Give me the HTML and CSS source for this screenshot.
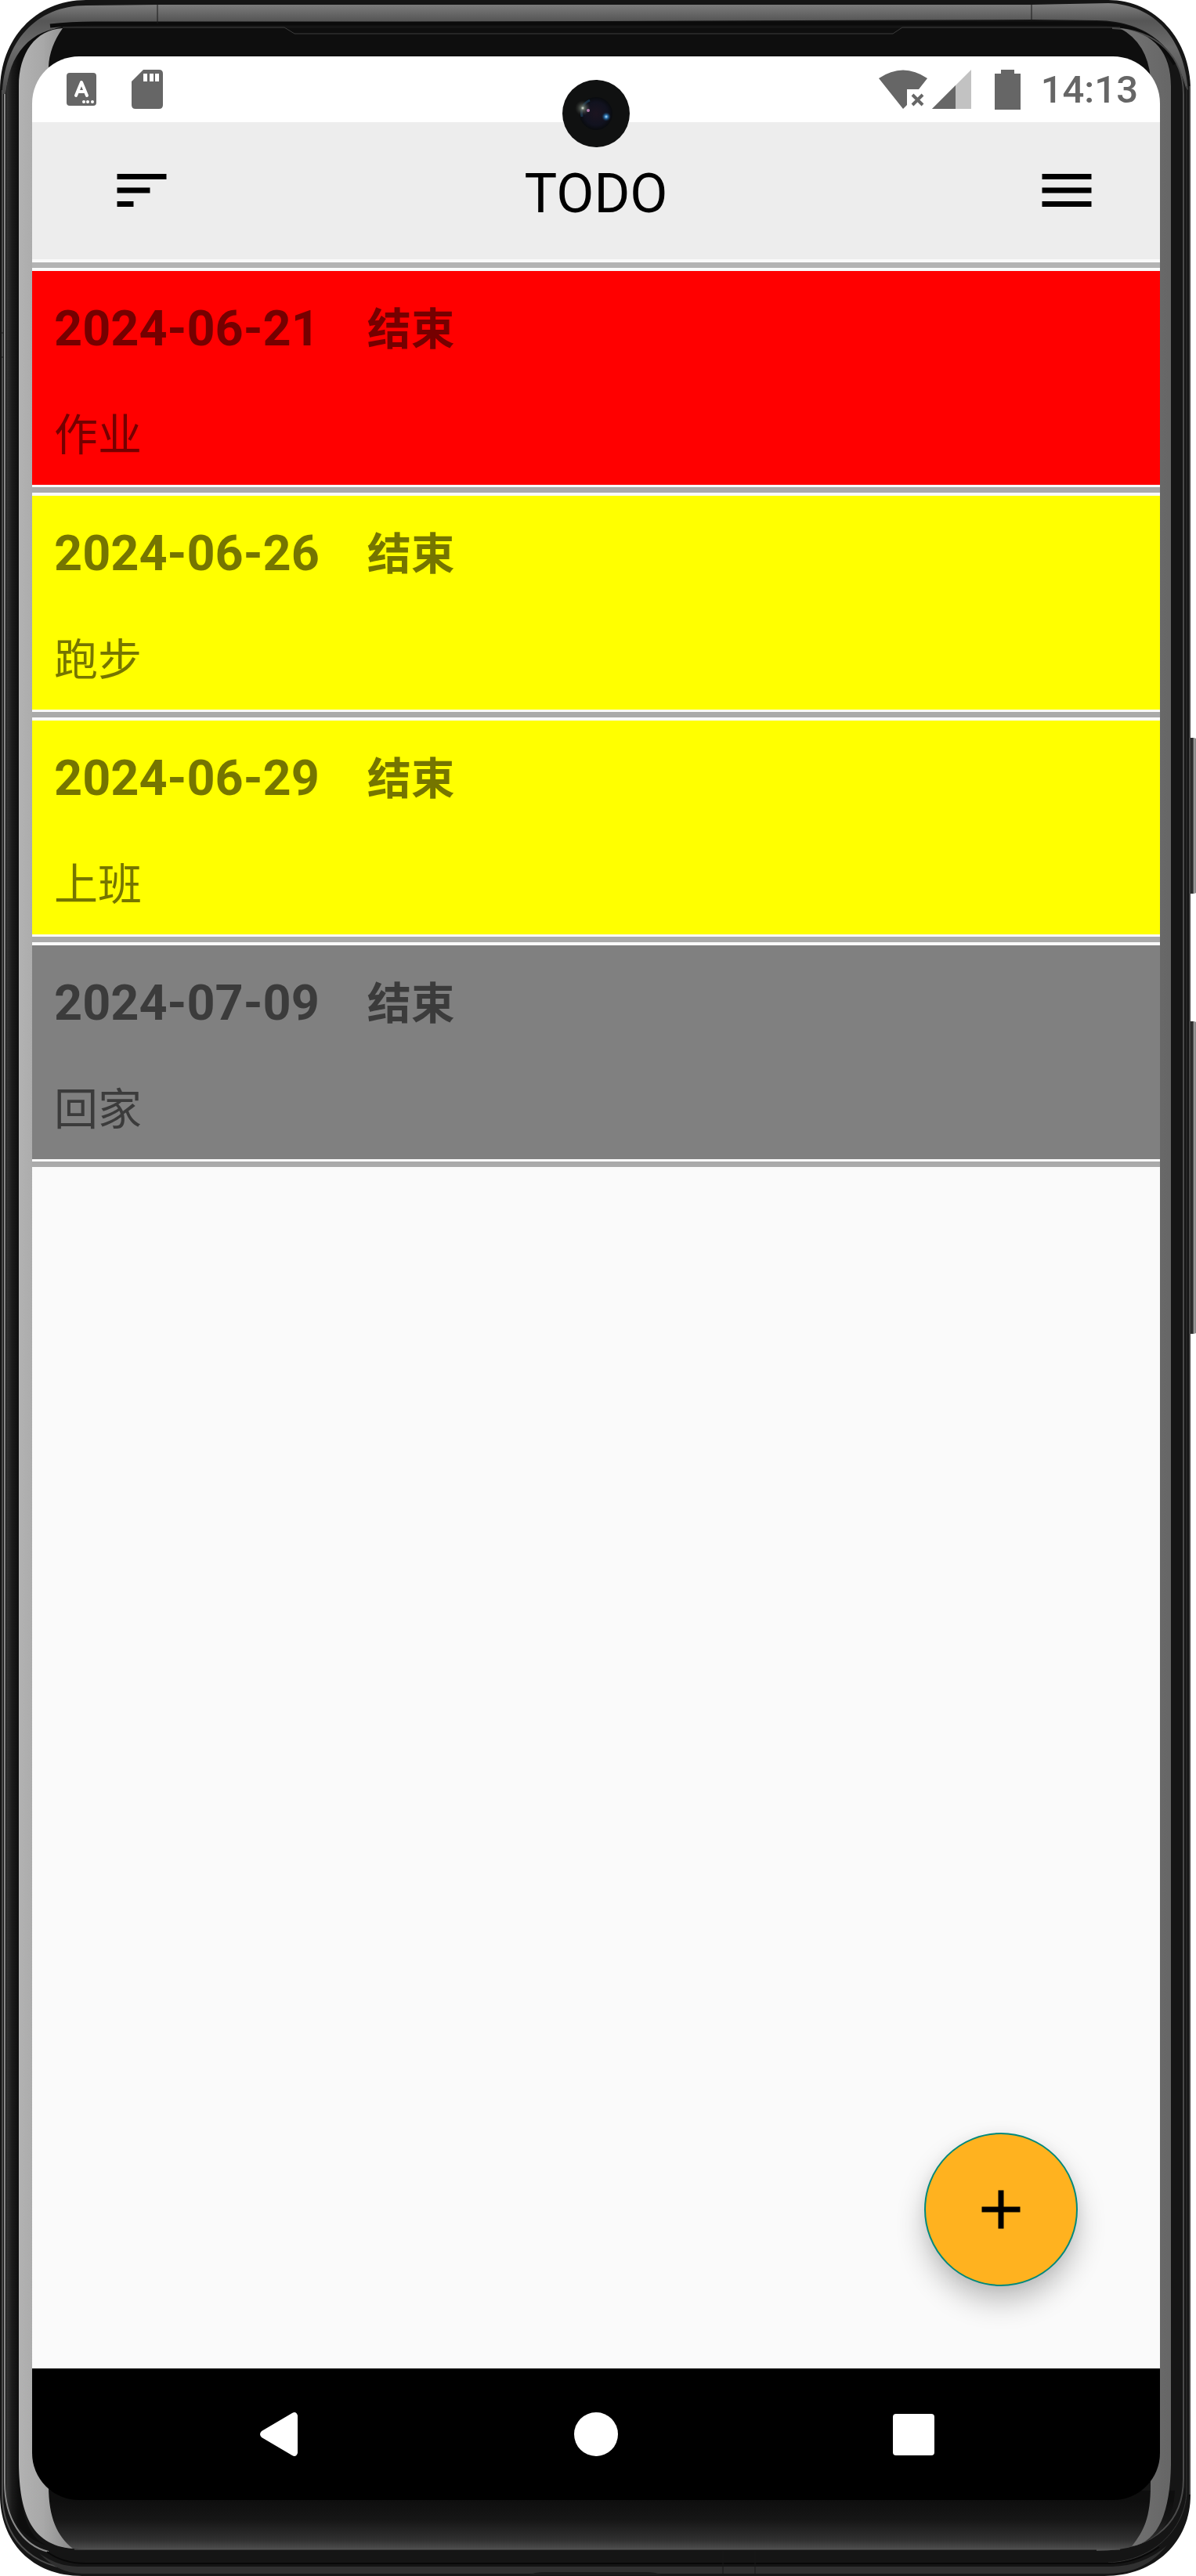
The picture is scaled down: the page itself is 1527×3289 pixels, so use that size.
FILE: index.html
```html
<!DOCTYPE html>
<html lang="zh-CN">
<head>
<meta charset="utf-8">
<meta name="viewport" content="width=device-width, initial-scale=1">
<title>TODO</title>
<link rel="stylesheet" href="styles.css">
</head>
<body>
<div class="device">
  <svg class="device-frame" viewBox="0 0 1527 3289" preserveAspectRatio="none" aria-hidden="true">
    <defs>
      <linearGradient id="rim" x1="0" y1="0" x2="0" y2="120" gradientUnits="userSpaceOnUse">
        <stop offset=".05" stop-color="#7c7c7c"/><stop offset=".22" stop-color="#565656"/><stop offset=".5" stop-color="#6c6c6c"/><stop offset="1" stop-color="#4a4a4a"/>
      </linearGradient>
      <linearGradient id="edgeLeft" x1="7" y1="0" x2="24" y2="0" gradientUnits="userSpaceOnUse"><stop offset="0" stop-color="#383838"/><stop offset=".5" stop-color="#1a1a1a"/><stop offset="1" stop-color="#0d0d0d"/></linearGradient>
      <linearGradient id="silver"><stop offset="0" stop-color="#b2b2b2"/><stop offset=".45" stop-color="#a8a8a8"/><stop offset="1" stop-color="#8a8a8a"/></linearGradient>
      <linearGradient id="silverRight"><stop offset="0" stop-color="#747474"/><stop offset="1" stop-color="#666"/></linearGradient>
      <linearGradient id="chin" x1="0" y1="3192" x2="0" y2="3256" gradientUnits="userSpaceOnUse">
        <stop offset="0" stop-color="#0e0e0e"/><stop offset=".4" stop-color="#161616"/><stop offset=".8" stop-color="#303030"/><stop offset="1" stop-color="#505050"/>
      </linearGradient>
      <linearGradient id="key" x1="1519" y1="0" x2="1527" y2="0" gradientUnits="userSpaceOnUse"><stop offset="0" stop-color="#262626"/><stop offset=".5" stop-color="#303030"/><stop offset=".7" stop-color="#a0a0a0"/><stop offset="1" stop-color="#808080"/></linearGradient>
    </defs>
    <rect x="1515" y="942" width="14" height="199" rx="5" fill="url(#key)"/>
    <rect x="1515" y="1304" width="14" height="399" rx="5" fill="url(#key)"/>
    <path fill="#151515" d="M0 115C0 50 45 0 110 0H1415C1475 0 1520 50 1520 115V3185C1520 3245 1475 3289 1410 3289H105C40 3289 0 3245 0 3185Z"/>
    <path fill="url(#rim)" d="M3 120C5 55 45 7 110 7L201 6H1317L1415 4C1475 6 1512 50 1517 115L1514 112C1502 65 1470 27 1400 26L1317 25L201 29L110 30C55 31 15 60 7 120Z"/>
    <path fill="url(#edgeLeft)" d="M8 3180V120C10 70 40 36 85 35L80 37C45 38 24 70 24 110V3147C25 3205 35 3240 60 3250C25 3240 8 3210 8 3180Z"/>
    <path fill="none" stroke="#4c4c4c" stroke-width="2" d="M3 115V3185C3 3235 35 3280 105 3281"/>
    <path fill="none" stroke="#8a8a8a" stroke-width="2" d="M6 120V3170C6 3215 28 3250 62 3258"/>
    <path fill="#0e0e0e" d="M80 36H1430C1475 38 1495 60 1495 110V3150H24V110C24 70 40 38 80 36Z"/>
    <path fill="none" stroke="#0b0b0b" stroke-width="5" d="M64 33Q90 30 120 30H1405Q1470 32 1500 82"/>
    <path fill="none" stroke="#3c3c3c" stroke-width="1" d="M80 35H363L376 43H1140L1152 35H1430"/>
    <path fill="none" stroke="#4a4a4a" stroke-width="2" d="M1420 36C1480 38 1511 75 1511 120V3165C1511 3215 1480 3256 1400 3256"/>
    <path fill="none" stroke="#777" stroke-width="1" d="M1519 110V3185"/>
    <path fill="none" stroke="#343434" stroke-width="1" d="M1515 110V3180C1515 3225 1475 3270 1415 3272"/>
    <path fill="url(#chin)" d="M30 3180H1500C1498 3225 1475 3255 1410 3255H110C60 3255 38 3235 30 3180Z"/>
    <path fill="none" stroke="#585858" stroke-width="1" d="M95 3255H1430"/>
    <path fill="#303030" d="M50 3260C75 3277 90 3277 110 3277H1420Q1460 3276 1490 3250C1465 3280 1440 3286 1410 3286H105Q75 3286 50 3260Z"/>
    <path fill="none" stroke="#080808" stroke-width="2" d="M60 3258Q80 3273 110 3273H1415Q1450 3273 1480 3252"/>
    <path fill="#1b1b1b" d="M675 3288Q682 3284 695 3284H825Q838 3284 845 3288Z"/>
    <path fill="url(#silver)" d="M80 36C45 38 24 68 24 110V3147C25 3205 38 3250 93 3254C73 3238 62 3215 62 3173V85Q63 60 80 36Z"/>
    <path fill="url(#silverRight)" d="M1430 36C1475 42 1495 68 1495 110V3147C1494 3205 1480 3246 1445 3251C1460 3232 1469 3215 1469 3173V100Q1465 55 1430 36Z"/>
    <path stroke="#181818" stroke-width="1" d="M201 6V30M1317 3V26M923 3257V3287M964 3257V3287M0 425H5M0 456H5"/>
  </svg>

  <div class="screen">
    <div class="status-bar">
      <div class="status-group status-left">
        <svg width="38" height="42" viewBox="0 0 38 42" aria-label="键盘"><rect width="38" height="42" rx="4" fill="#666"/><path d="M12 29L19 12L26 29M15 24H23" fill="none" stroke="#fff" stroke-width="4" stroke-linecap="round" stroke-linejoin="round"/><g fill="#fff"><circle cx="22" cy="37" r="2"/><circle cx="27" cy="37" r="2"/><circle cx="33" cy="37" r="2"/></g></svg>
        <svg width="40" height="50" viewBox="0 0 40 50" aria-label="存储卡"><path fill="#666" d="M15 0H35Q40 0 40 5V45Q40 50 35 50H5Q0 50 0 45V15Z"/><path fill="#fff" d="M15 5H20V15H15ZM23 5H28V15H23ZM30 5H35V15H30Z"/></svg>
      </div>
      <div class="status-group">
        <svg width="62" height="50" viewBox="0 0 62 50" aria-label="无线网络"><path fill="#666" d="M0 11Q31 -10 62 11L51 25H36V45L31 50Z"/><path d="M43 32L56 45M56 32L43 45" stroke="#666" stroke-width="4"/></svg>
        <svg class="signal" width="50" height="50" viewBox="0 0 50 50" aria-label="信号"><path fill="#c2c2c2" d="M50 0V50H0Z"/><path fill="#666" d="M30 20V50H0Z"/></svg>
        <svg class="battery" width="33" height="51" viewBox="0 0 33 51" aria-label="电池"><path fill="#666" d="M8 0H25V5H33V51H0V5H8Z"/></svg>
        <time class="clock">14:13</time>
      </div>
    </div>

    <header class="app-bar">
      <button class="icon-button sort-button" type="button" aria-label="排序"><svg width="84" height="84" viewBox="0 0 24 24"><path d="M3 18h6v-2H3v2zM3 6v2h18V6H3zm0 7h12v-2H3v2z"/></svg></button>
      <h1 class="title">TODO</h1>
      <button class="icon-button menu-button" type="button" aria-label="菜单"><svg width="84" height="84" viewBox="0 0 24 24"><path d="M3 18h18v-2H3v2zm0-5h18v-2H3v2zm0-7v2h18V6H3z"/></svg></button>
    </header>

    <main class="content">
      <ul class="task-list">
        <li class="task"><div class="task-card overdue"><p class="task-head"><time class="task-date">2024-06-21</time><span class="task-state">结束</span></p><p class="task-name">作业</p></div></li>
        <li class="task"><div class="task-card soon"><p class="task-head"><time class="task-date">2024-06-26</time><span class="task-state">结束</span></p><p class="task-name">跑步</p></div></li>
        <li class="task"><div class="task-card soon"><p class="task-head"><time class="task-date">2024-06-29</time><span class="task-state">结束</span></p><p class="task-name">上班</p></div></li>
        <li class="task"><div class="task-card later"><p class="task-head"><time class="task-date">2024-07-09</time><span class="task-state">结束</span></p><p class="task-name">回家</p></div></li>
      </ul>
      <button class="add-button" type="button" aria-label="添加"><svg width="84" height="84" viewBox="0 0 24 24"><path d="M19 13h-6v6h-2v-6H5v-2h6V5h2v6h6v2z"/></svg></button>
    </main>

    <nav class="nav-bar">
      <button class="nav-button" type="button" aria-label="返回"><svg width="50" height="58" viewBox="0 0 50 58"><path fill="#fff" d="M49 5V53Q47 59 42 56L3 33Q-1 29 3 25L42 2Q47 -1 49 5Z"/></svg></button>
      <button class="nav-button" type="button" aria-label="主页"><svg width="56" height="56" viewBox="0 0 56 56"><circle cx="28" cy="28" r="28" fill="#fff"/></svg></button>
      <button class="nav-button" type="button" aria-label="最近"><svg width="53" height="53" viewBox="0 0 53 53"><rect width="53" height="53" rx="4" fill="#fff"/></svg></button>
    </nav>

    <svg class="camera" width="86" height="86" viewBox="0 0 86 86" aria-hidden="true">
      <defs>
        <radialGradient id="lens"><stop offset="0" stop-color="#1c1420"/><stop offset=".7" stop-color="#11121f"/><stop offset="1" stop-color="#090b0e"/></radialGradient>
        <radialGradient id="flare"><stop offset="0" stop-color="#e8eee0"/><stop offset=".25" stop-color="#6d776c" stop-opacity=".8"/><stop offset="1" stop-color="#333" stop-opacity="0"/></radialGradient>
        <radialGradient id="glint"><stop offset="0" stop-color="#bfe4ff"/><stop offset=".35" stop-color="#2f78b5"/><stop offset="1" stop-color="#12304c" stop-opacity="0"/></radialGradient>
      </defs>
      <circle cx="43" cy="43" r="43" fill="#101111"/>
      <circle cx="43" cy="43" r="21" fill="url(#lens)"/>
      <path d="M25 47Q22 32 35 26" fill="none" stroke="#1d3e5a" stroke-width="3" opacity=".7"/>
      <circle cx="26" cy="36" r="10" fill="url(#flare)"/>
      <circle cx="33" cy="39" r="2" fill="#b57aac"/>
      <circle cx="56" cy="47" r="6" fill="url(#glint)"/>
    </svg>
  </div>
</div>
</body>
</html>
```
FILE: styles.css
```css
* {
  box-sizing: border-box;
}

body {
  margin: 0;
  background: #fff;
  font-family: Roboto, "Noto Sans CJK SC", sans-serif;
}

h1,
p,
ul {
  margin: 0;
  padding: 0;
}

svg {
  display: block;
}

button {
  border: 0;
  padding: 0;
  background: none;
}

.device {
  position: relative;
  display: flex;
  min-height: 100vh;
  padding: 72px 46px 97px 41px;
}

.device-frame {
  position: absolute;
  inset: 0;
  width: 100%;
  height: 100%;
}

.screen {
  position: relative;
  display: flex;
  flex: 1;
  flex-direction: column;
  overflow: hidden;
  border-radius: 60px;
}

.status-bar {
  display: flex;
  align-items: center;
  justify-content: space-between;
  height: 84px;
  padding: 0 28px 0 44px;
  background: #fff;
}

.status-group {
  display: flex;
  align-items: center;
}

.status-left {
  gap: 45px;
}

.signal {
  margin-left: 6px;
}

.battery {
  margin: 0 26px 0 30px;
}

.clock {
  padding-top: 2px;
  color: #666;
  font-size: 49px;
  font-weight: 500;
  line-height: 56px;
}

.camera {
  position: absolute;
  top: 30px;
  left: calc(50% - 43px);
}

.app-bar {
  display: grid;
  grid-template-columns: 1fr auto 1fr;
  align-items: center;
  height: 175px;
  padding-bottom: 1px;
  background: #ededed;
}

.sort-button {
  justify-self: start;
  margin-left: 98px;
}

.menu-button {
  justify-self: end;
  margin-right: 77px;
}

.title {
  padding-top: 8px;
  font-size: 70px;
  font-weight: 400;
  line-height: 84px;
}

.content {
  position: relative;
  flex: 1;
  padding-top: 4px;
  background: #fafafa;
}

.task-list {
  border-top: 7px solid #b3b3b3;
  list-style: none;
}

.task {
  padding: 4px 0 3px;
  border-bottom: 7px solid #aaa;
}

.task-card {
  display: flex;
  flex-direction: column;
  gap: 52px;
  padding: 32px 28px 21px;
  color: rgba(0, 0, 0, 0.54);
  font-size: 56px;
  line-height: 84px;
}

.overdue {
  background: #f00;
}

.soon {
  background: #ff0;
}

.later {
  background: #808080;
}

.task-head {
  display: flex;
  align-items: center;
  gap: 61px;
  height: 84px;
  font-weight: 700;
}

.task-date {
  font-size: 63px;
}

.task-state {
  padding-top: 2px;
}

.task-name {
  height: 84px;
}

.add-button {
  position: absolute;
  right: 105px;
  bottom: 105px;
  display: grid;
  place-items: center;
  width: 196px;
  height: 196px;
  border: 2px solid #00897b;
  border-radius: 50%;
  background: #ffb21f;
  box-shadow: 0 20px 36px rgba(0, 0, 0, 0.24), 0 2px 16px rgba(0, 0, 0, 0.06);
}

.nav-bar {
  display: grid;
  grid-template-columns: repeat(3, 1fr);
  height: 168px;
  padding: 0 112px;
  background: #000;
}

.nav-button {
  display: grid;
  place-items: center;
}
```
